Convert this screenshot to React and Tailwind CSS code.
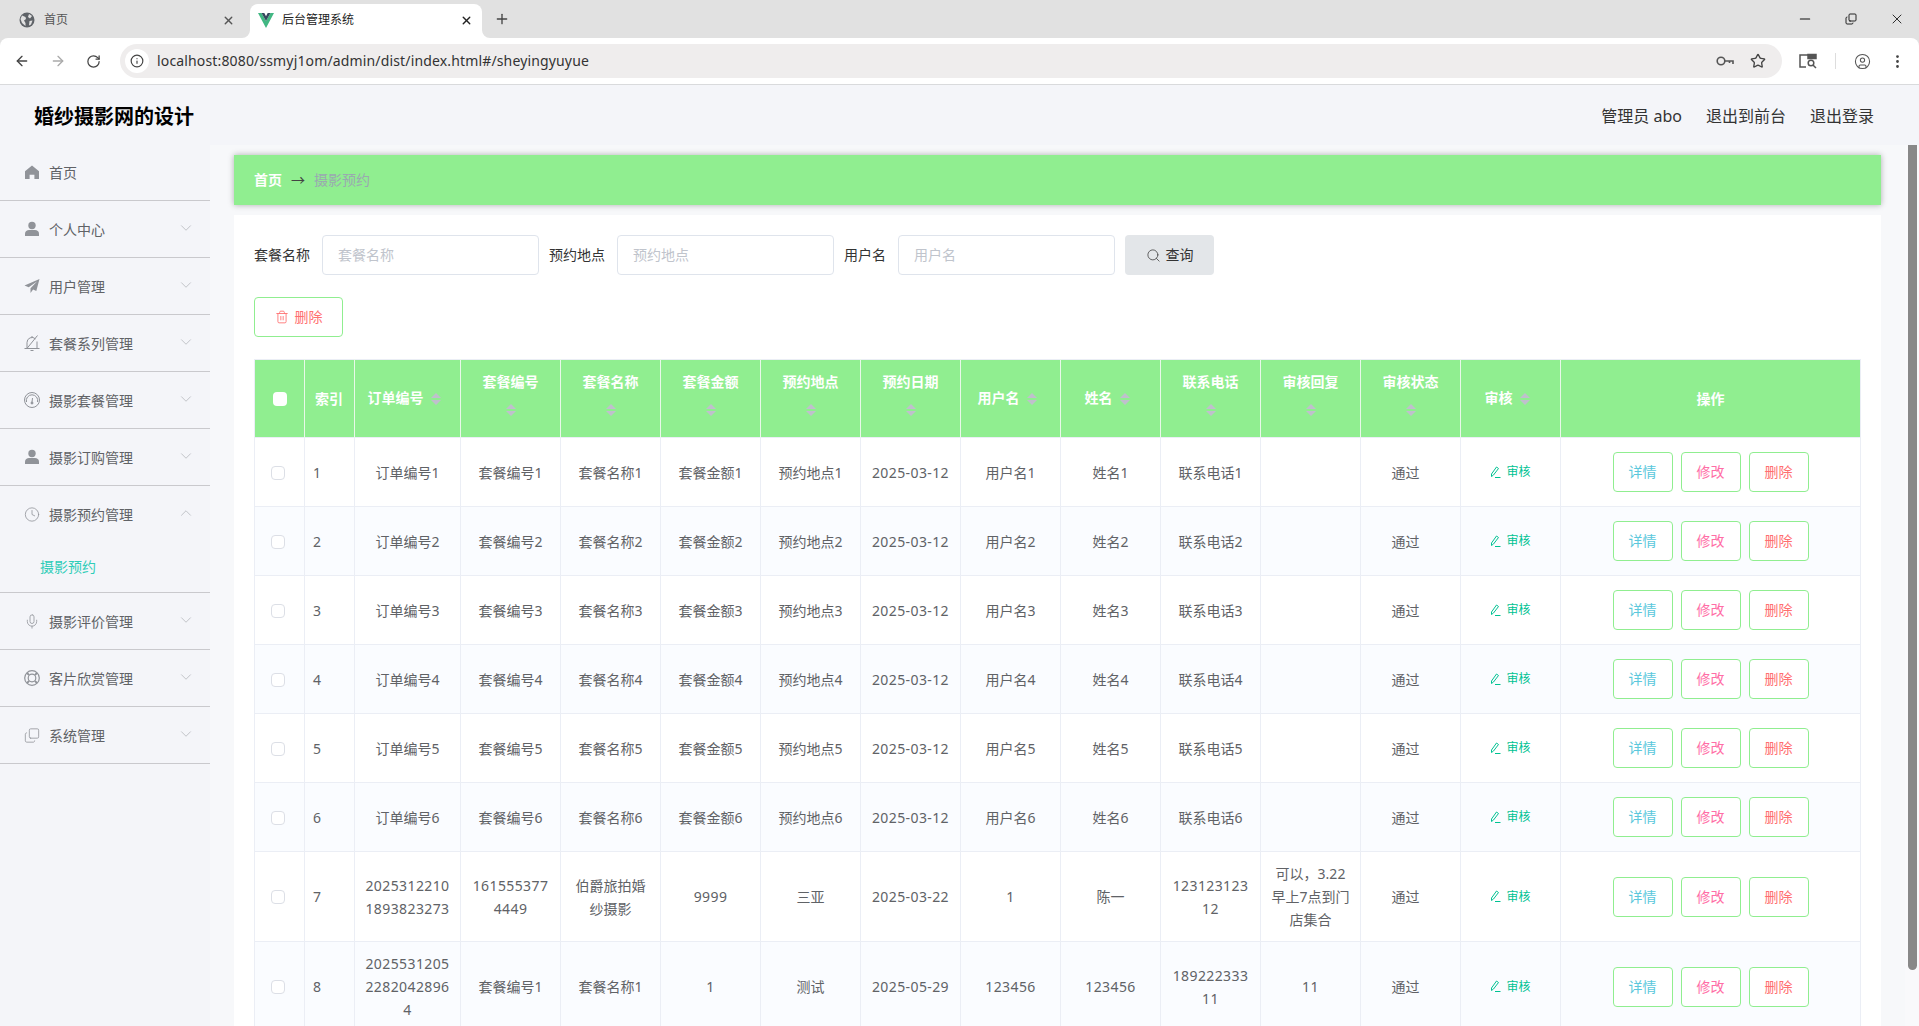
import React from "react";
import { ArrowLeft, ArrowRight, RotateCw, Info, Star, Minus, X, Plus, Search, Trash2, ChevronDown, ChevronUp, Clock, Mic, Copy, CircleUser, EllipsisVertical } from "lucide-react";

const HomeIcon = () => (
  <svg width="16" height="16" viewBox="0 0 16 16" className="fill-[#909399]">
    <path d="M8 1.500 1 7.200V15h4.600v-4.200h4.800V15H15V7.200z" />
  </svg>
);

const PersonIcon = () => (
  <svg width="16" height="16" viewBox="0 0 16 16" className="fill-[#909399]">
    <circle cx="8" cy="4.500" r="3.700" />
    <path d="M1 15v-2.500C1 10.200 3 9 5 9h6c2 0 4 1.200 4 3.500V15z" />
  </svg>
);

const PlaneIcon = () => (
  <svg width="16" height="16" viewBox="0 0 16 16" className="fill-[#909399]">
    <path d="M15.500 1 .5 7.500l4.200 1.800L13 3.500 6.500 10.200V15l2.600-3.400 3.200 1.400z" />
  </svg>
);

const BellSlashIcon = () => (
  <svg width="16" height="16" viewBox="0 0 16 16" fill="none" stroke="#909399" strokeWidth="1">
    <path d="M.5 13.500h15M3 13.500V7.500a5 5 0 0 1 8.500-3.600M13 6.500v7M6.500 15.500h3M8 1v1.500M2.500 14 13.500.5" />
  </svg>
);

const GaugeIcon = () => (
  <svg width="16" height="16" viewBox="0 0 16 16" fill="none" stroke="#909399" strokeWidth="1">
    <circle cx="8" cy="8" r="7.500" />
    <path d="M2.500 10A5.700 5.700 0 1 1 13.500 10M8.500 6 8 10" />
    <circle cx="8" cy="11" r="1" fill="#909399" />
  </svg>
);

const HelpRingIcon = () => (
  <svg width="16" height="16" viewBox="0 0 16 16" fill="none" stroke="#909399">
    <circle cx="8" cy="8" r="7.300" strokeWidth="1.200" />
    <circle cx="8" cy="8" r="3.800" strokeWidth="1.200" />
    <path d="M3 3l2.200 2.200M13 3l-2.200 2.200M3 13l2.200-2.200M13 13l-2.200-2.200" strokeWidth="1.800" />
  </svg>
);

const EditIcon = () => (
  <svg width="11" height="12" viewBox="0 0 11 12" fill="none" stroke="currentColor" strokeWidth="1" className="inline mr-[5px] -mt-[2px]">
    <path d="M6.500 1 8.500 2.500 3.500 9 1.500 10.500 1.500 8zM5 11.500h5.500" />
  </svg>
);

const KeyIcon = () => (
  <svg width="18" height="12" viewBox="0 0 18 12" fill="none" stroke="#555" strokeWidth="1.600">
    <circle cx="5" cy="6" r="3.800" />
    <path d="M9 6h8v3M13.500 6v2" />
  </svg>
);

const TabSearchIcon = () => (
  <svg width="18" height="16" viewBox="0 0 18 16" fill="none" stroke="#555" strokeWidth="1.500">
    <path d="M7 14H1V2h15v4" />
    <path d="M9 1.500h8v4H9z" fill="#555" />
    <circle cx="12" cy="10" r="2.800" />
    <path d="M14 12l3 3" />
  </svg>
);

const TabCorner = ({ className }) => (
  <svg width="8" height="8" viewBox="0 0 8 8" className={`absolute bottom-0 ${className}`}>
    <path d="M8 0v8H0a8 8 0 0 0 8-8z" fill="#fff" />
  </svg>
);

const menu = [
  { name: "首页", icon: <HomeIcon />, noArrow: true },
  { name: "个人中心", icon: <PersonIcon /> },
  { name: "用户管理", icon: <PlaneIcon /> },
  { name: "套餐系列管理", icon: <BellSlashIcon /> },
  { name: "摄影套餐管理", icon: <GaugeIcon /> },
  { name: "摄影订购管理", icon: <PersonIcon /> },
  { name: "摄影预约管理", icon: <Clock size={17} strokeWidth={1.2} color="#909399" />, open: true, sub: "摄影预约" },
  { name: "摄影评价管理", icon: <Mic size={17} strokeWidth={1.2} color="#909399" /> },
  { name: "客片欣赏管理", icon: <HelpRingIcon /> },
  { name: "系统管理", icon: <Copy size={17} strokeWidth={1.2} color="#909399" className="-scale-y-100" /> },
];

const columns = [
  { name: "订单编号", w: "w-[106px]" },
  { name: "套餐编号", w: "w-[100px]" },
  { name: "套餐名称", w: "w-[100px]" },
  { name: "套餐金额", w: "w-[100px]" },
  { name: "预约地点", w: "w-[100px]" },
  { name: "预约日期", w: "w-[100px]" },
  { name: "用户名", w: "w-[100px]" },
  { name: "姓名", w: "w-[100px]" },
  { name: "联系电话", w: "w-[100px]" },
  { name: "审核回复", w: "w-[100px]" },
  { name: "审核状态", w: "w-[100px]" },
  { name: "审核", w: "w-[100px]" },
];

const demoRows = [1, 2, 3, 4, 5, 6].map((n) => [
  `订单编号${n}`, `套餐编号${n}`, `套餐名称${n}`, `套餐金额${n}`, `预约地点${n}`,
  "2025-03-12", `用户名${n}`, `姓名${n}`, `联系电话${n}`, "",
]);

const rows = [
  ...demoRows,
  ["20253122101893823273", "1615553774449", "伯爵旅拍婚纱摄影", "9999", "三亚", "2025-03-22", "1", "陈一", "12312312312", "可以，3.22早上7点到门店集合"],
  ["202553120522820428964", "套餐编号1", "套餐名称1", "1", "测试", "2025-05-29", "123456", "123456", "18922233311", "11"],
];

const Caret = () => (
  <span className="inline-flex w-6 h-[34px] flex-col items-center justify-center gap-[2px] align-middle">
    <span className="w-0 h-0 border-x-[5px] border-x-transparent border-b-[5px] border-b-[#bfc0cc]" />
    <span className="w-0 h-0 border-x-[5px] border-x-transparent border-t-[5px] border-t-[#bfc0cc]" />
  </span>
);

const SearchField = ({ label, width }) => (
  <div className="flex items-center">
    <span className="text-sm text-[#333] mr-3">{label}</span>
    <input
      placeholder={label}
      className={`${width} h-10 px-[15px] pb-[2px] text-sm bg-white border border-[#dfe4ec] rounded outline-none placeholder:text-[#c0c4cc]`}
    />
  </div>
);

const ActionButton = ({ color, children }) => (
  <button className={`w-[60px] h-10 text-sm border border-[#90ee90] rounded bg-white ${color}`}>{children}</button>
);

const BrowserBar = () => (
  <div className="shrink-0 bg-[#e1e1e1]">
    <div className="h-[38px] flex items-end text-xs">
      <div className="w-[242px] h-[34px] ml-2 flex items-center pl-[11px] pr-[15px] pb-[2px] text-[#555]">
        <svg width="16" height="16" viewBox="0 0 16 16">
          <circle cx="8" cy="8" r="7.500" fill="#5f6368" />
          <path d="M3 3.500 6.500 5l.5 2-2 1.500L6.500 11v3L3 11 1.500 7zM10 2l3 2-2 2.500L9 5zM10.500 9l3-.5-1.500 4-2 1z" fill="#e1e1e1" />
        </svg>
        <span className="ml-[9px] flex-1">首页</span>
        <X size={13} strokeWidth={2.5} color="#555" />
      </div>
      <div className="relative w-[232px] h-[34px] bg-white rounded-t-lg flex items-center pl-2 pr-[9px] pb-[2px] text-[#222]">
        <TabCorner className="-left-2" />
        <TabCorner className="-right-2 -scale-x-100" />
        <svg width="16" height="15" viewBox="0 0 16 15">
          <path d="M0 0h3.500L8 8l4.500-8H16L8 15z" fill="#41b883" />
          <path d="M3.500 0h2.800L8 3.200 9.700 0h2.800L8 8z" fill="#35495e" />
        </svg>
        <span className="ml-2 flex-1">后台管理系统</span>
        <X size={13} strokeWidth={2.5} color="#222" />
      </div>
      <Plus size={16} color="#444" className="ml-3 mb-[11px]" />
      <div className="flex-1" />
      <div className="flex items-center gap-[32px] mb-[11px] mr-[14px]">
        <Minus size={16} strokeWidth={1.6} color="#111" />
        <Copy size={12} strokeWidth={1.8} color="#111" className="-scale-y-100" />
        <X size={16} strokeWidth={1.3} color="#111" />
      </div>
    </div>
    <div className="h-[47px] bg-white rounded-t-lg border-b border-[#d9dadc] flex items-center text-[#444]">
      <div className="w-[120px] flex items-center gap-5 pl-[14px]">
        <ArrowLeft size={16} color="#444" />
        <ArrowRight size={16} color="#aaa" />
        <RotateCw size={15} color="#444" />
      </div>
      <div className="w-[1662px] h-[34px] bg-[#efeded] rounded-full flex items-center pl-[5px] pr-[16px]">
        <span className="w-6 h-6 rounded-full bg-white flex items-center justify-center">
          <Info size={14} color="#444" />
        </span>
        <span className="ml-[8px] flex-1 text-sm text-[#333] tracking-[0.15px]">localhost:8080/ssmyj1om/admin/dist/index.html#/sheyingyuyue</span>
        <span className="mr-4"><KeyIcon /></span>
        <Star size={16} color="#444" />
      </div>
      <div className="flex-1 flex items-center pl-[17px]">
        <TabSearchIcon />
        <span className="w-px h-4 bg-[#ddd] ml-[18px]" />
        <CircleUser size={17} strokeWidth={1.5} color="#555" className="ml-[18px]" />
        <EllipsisVertical size={17} color="#444" className="ml-[18px]" />
      </div>
    </div>
  </div>
);

const App = () => {
  return (
    <div className="w-[1919px] h-[1026px] overflow-hidden flex flex-col bg-[#f4f5f9] font-['Noto_Sans','Noto_Sans_CJK_SC',sans-serif]">
      <BrowserBar />

      <div className="h-[60px] shrink-0 flex items-center justify-between pl-[34px] pr-[45px]">
        <span className="mt-1 text-xl font-bold text-black">婚纱摄影网的设计</span>
        <div className="mt-[2px] flex gap-6 text-base text-[#333]">
          <span>管理员 abo</span>
          <span>退出到前台</span>
          <span>退出登录</span>
        </div>
      </div>

      <div className="flex-1 flex min-h-0">
        {/* sidebar */}
        <div className="w-[210px] shrink-0 text-sm text-[#606266]">
          {menu.map((m) => (
            <div key={m.name} className="border-b border-[#c9c9cd] first:-mt-px">
              <div className="h-14 flex items-center pl-6 pr-[15px]">
                <span className="w-4 flex justify-center">{m.icon}</span>
                <span className="ml-[9px] mt-[2px] flex-1">{m.name}</span>
                {!m.noArrow && (m.open
                  ? <ChevronUp size={18} strokeWidth={1} color="#b0b3b8" className="mb-[3px]" />
                  : <ChevronDown size={18} strokeWidth={1} color="#b0b3b8" className="mb-[3px]" />)}
              </div>
              {m.sub && <div className="h-[50px] pl-10 flex items-center text-[#2fcdb8]">{m.sub}</div>}
            </div>
          ))}
        </div>

        {/* content */}
        <div className="flex-1 min-w-0 bg-[#f7f8fa] px-6 pt-[10px]">
          <div className="h-[50px] bg-[#90ee90] shadow-[0_0_6px_rgba(0,0,0,0.3)] flex items-center pl-5 text-sm">
            <span className="text-white font-bold">首页</span>
            <span className="mx-[9px] text-[#444]">→</span>
            <span className="text-[#9aa9b0]">摄影预约</span>
          </div>

          <div className="mt-[10px] bg-white px-5 pt-5 h-[900px]">
            <div className="flex items-center gap-[10px]">
              <SearchField label="套餐名称" width="w-[217px]" />
              <SearchField label="预约地点" width="w-[217px]" />
              <SearchField label="用户名" width="w-[217px]" />
              <button className="w-[89px] h-10 flex items-center justify-center gap-[5px] text-sm text-[#333] bg-[#e3e6e9] rounded">
                <Search size={15} strokeWidth={1.3} color="#444" />
                查询
              </button>
            </div>

            <button className="mt-[22px] w-[89px] h-10 flex items-center justify-center gap-[6px] text-sm text-[#ff7070] border border-[#90ee90] rounded bg-white">
              <Trash2 size={14} color="#ff7070" strokeWidth={1.5} />
              删除
            </button>

            <table className="mt-[22px] w-[1607px] table-fixed border-collapse border border-[#ebeef5] text-sm text-[#606266] leading-[23px]">
              <colgroup>
                <col className="w-[50px]" />
                <col className="w-[50px]" />
                {columns.map((c) => <col key={c.name} className={c.w} />)}
                <col className="w-[300px]" />
              </colgroup>
              <thead>
                <tr className="h-[78px] bg-[#90ee90] text-white">
                  <th className="border-r border-[#e8f8e8] text-center">
                    <span className="inline-block w-[14px] h-[14px] -translate-y-px bg-white rounded-sm align-middle" />
                  </th>
                  <th className="border-r border-[#e8f8e8] text-left px-[10px] font-bold">索引</th>
                  {columns.map((c) => (
                    <th key={c.name} className="border-r border-[#e8f8e8] px-[10px] py-[10px] font-bold">
                      {c.name}
                      <Caret />
                    </th>
                  ))}
                  <th className="font-bold">操作</th>
                </tr>
              </thead>
              <tbody>
                {rows.map((row, i) => (
                  <tr key={i} className={`border-t border-[#ebeef5] h-[69px] ${i % 2 === 1 ? "bg-[#fafcff]" : "bg-white"}`}>
                    <td className="border-r border-[#ebeef5] text-center">
                      <span className="inline-block w-[14px] h-[14px] -translate-x-[2px] -translate-y-px bg-white border border-[#dcdfe6] rounded-sm align-middle" />
                    </td>
                    <td className="border-r border-[#ebeef5] pl-2">{i + 1}</td>
                    {row.map((cell, j) => (
                      <td key={j} className={`border-r border-[#ebeef5] px-[10px] py-[10px] text-center break-all ${/^[\d-]+$/.test(cell) ? "tracking-[0.4px]" : ""}`}>{cell}</td>
                    ))}
                    <td className="border-r border-[#ebeef5] pr-[10px] text-center">通过</td>
                    <td className="border-r border-[#ebeef5] text-center text-xs text-[#00c292]">
                      <EditIcon />
                      审核
                    </td>
                    <td>
                      <div className="flex justify-center gap-2">
                        <ActionButton color="text-[#5bc8dc]">详情</ActionButton>
                        <ActionButton color="text-[#ff6ea6]">修改</ActionButton>
                        <ActionButton color="text-[#ff6f6f]">删除</ActionButton>
                      </div>
                    </td>
                  </tr>
                ))}
              </tbody>
            </table>
          </div>
        </div>

        {/* page scrollbar */}
        <div className="w-[14px] shrink-0 bg-[#f9f9fb] pl-[3px]">
          <div className="w-[9px] h-[825px] bg-[#888] rounded-b-md" />
        </div>
      </div>
    </div>
  );
};

export default App;
